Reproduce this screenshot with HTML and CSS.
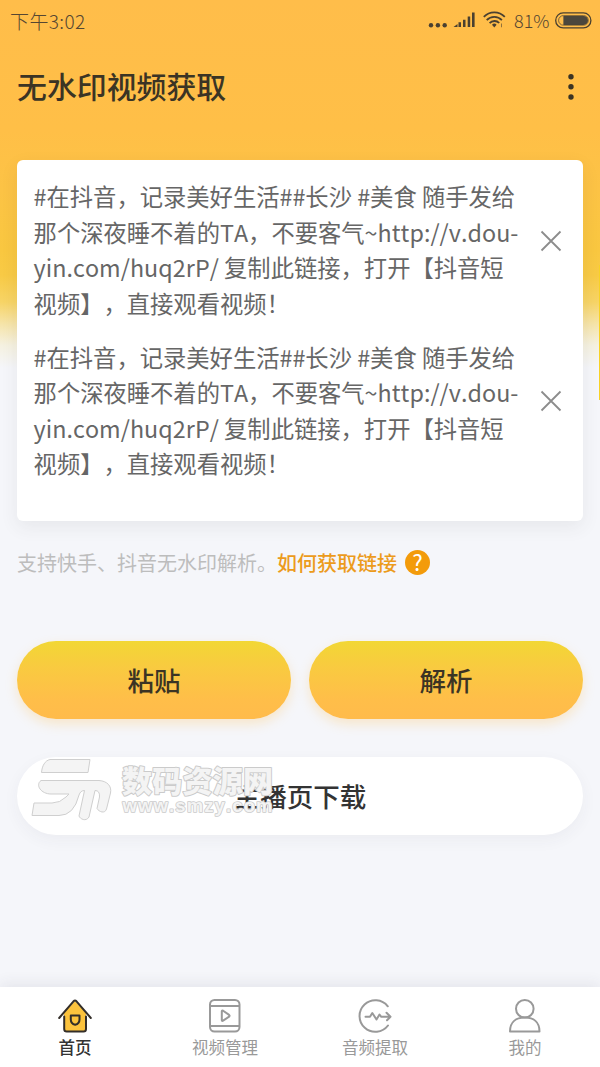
FILE: index.html
```html
<!DOCTYPE html>
<html lang="zh-CN">
<head>
<meta charset="utf-8">
<title>无水印视频获取</title>
<link rel="stylesheet" href="styles.css">
</head>
<body>
<div class="app">
  <div class="status">
    <span class="time">下午3:02</span>
    <svg class="signals" width="78" height="20" viewBox="0 0 78 20">
      <g fill="#4a4030">
        <circle cx="3" cy="15.3" r="2.2"/><circle cx="9.900" cy="15.3" r="2.2"/><circle cx="16.700" cy="15.3" r="2.2"/>
        <path d="M25.500 17l4-3V17zM30.500 12.200h2.500V17h-2.500zM35 9.700h2.500V17H35zM39.700 6.500h2.500V17h-2.500zM44 2.500h2.600V17H44z"/>
        <path d="M64 14.800a3.200 3.200 0 0 1 4.600 0L66.300 17.400z"/>
        <path d="M73 13.500v3.700h1v-3.700z" opacity=".6"/>
      </g>
      <g fill="none" stroke="#4a4030" stroke-width="1.800">
        <path d="M55.800 6.900a14.500 14.500 0 0 1 21 0M58.700 10.200a10.500 10.500 0 0 1 15.200 0M61.600 13.200a6.500 6.500 0 0 1 9.600-.200"/>
      </g>
    </svg>
    <span class="percent">81%</span>
    <svg class="battery" width="37" height="17" viewBox="0 0 37 17">
      <rect x=".7" y=".9" width="35.200" height="15" rx="7.500" fill="none" stroke="#4a4030" stroke-width="1.300"/>
      <path d="M8.400 3.900H28.500a4.500 4.500 0 0 1 0 9H8.400z" fill="#4b473d"/>
      <path d="M8.400 3.600H28.500a4.800 4.800 0 0 1 0 9.600H8.400a4.800 4.800 0 0 1 0-9.600z" fill="none" stroke="#4a4030" stroke-width=".700"/>
    </svg>
  </div>

  <div class="titlebar">
    <h1 class="title">无水印视频获取</h1>
    <svg class="more" width="8" height="28" viewBox="0 0 8 28" fill="#3b3424"><circle cx="4" cy="3.700" r="2.700"/><circle cx="4" cy="13.800" r="2.700"/><circle cx="4" cy="24" r="2.700"/></svg>
  </div>

  <div class="card">
    <div class="item">
      <p class="copy">#在抖音，记录美好生活##长沙 #美食 随手发给<br>那个深夜睡不着的TA，不要客气<span class="url">~http://v.dou-</span><br><span class="url">yin.com/huq2rP/</span> 复制此链接，打开【抖音短<br>视频】，直接观看视频！</p>
      <svg class="close" width="22" height="22" viewBox="0 0 22 22"><path d="M1.500 1.500l19 19M20.500 1.500l-19 19"/></svg>
    </div>
    <div class="item">
      <p class="copy">#在抖音，记录美好生活##长沙 #美食 随手发给<br>那个深夜睡不着的TA，不要客气<span class="url">~http://v.dou-</span><br><span class="url">yin.com/huq2rP/</span> 复制此链接，打开【抖音短<br>视频】，直接观看视频！</p>
      <svg class="close" width="22" height="22" viewBox="0 0 22 22"><path d="M1.500 1.500l19 19M20.500 1.500l-19 19"/></svg>
    </div>
  </div>

  <div class="hint">
    <span>支持快手、抖音无水印解析。</span><span class="hint-link">如何获取链接</span><span class="help">?</span>
  </div>

  <div class="actions">
    <div class="btn btn-gold">粘贴</div>
    <div class="btn btn-gold">解析</div>
  </div>

  <div class="btn btn-white">主播页下载
    <svg class="watermark" width="270" height="66" viewBox="0 0 270 66">
      <g fill="#f4f4f4" stroke="#cfcfcf" stroke-width="1" stroke-linejoin="round">
        <path d="M22 2.500H62L60 15.500H13.500C14 9 17 3.500 22 2.500z"/>
        <path d="M13 23.500H71C79 24 84 29 82.500 36L78.500 52C77 57 71 55 69 51.500L71.500 40Q72 33.500 67 33.500L61 60C58 65 52 62 51 59L56.500 33.500Q52.500 33.500 51 38Q46 58.500 31 58.500H4L6 46H24Q32 46 38 40L41 37H23C13 37 7 28 13 23.500z"/>
      </g>
      <text class="mark-name" x="94" y="35" textLength="151" lengthAdjust="spacing">数码资源网</text>
      <text class="mark-url" x="94.500" y="54.500" textLength="150" lengthAdjust="spacing">www.smzy.com</text>
    </svg>
  </div>

  <nav class="tabs">
    <div class="tab active">
      <svg width="36" height="36" viewBox="0 0 36 36" fill="none" stroke="#332e29" stroke-width="2" stroke-linecap="round" stroke-linejoin="round">
        <path d="M18 3L7 15V31q0 2.500 2.500 2.500h17q2.500 0 2.500-2.500V15z" fill="#fcc33d" stroke="none"/>
        <path d="M2.200 20L16.500 3.300q1.500-1.500 3 0L33.800 20M7.200 18.500V31q0 2.500 2.500 2.500h16.800q2.500 0 2.500-2.500V18.500"/>
        <path d="M13.800 17.500h8.700v4q0 4.200-4.300 5.300-4.400-1.100-4.400-5.300z"/>
      </svg>
      <span>首页</span>
    </div>
    <div class="tab">
      <svg width="36" height="36" viewBox="0 0 36 36" fill="none" stroke="#999" stroke-width="2" stroke-linejoin="round">
        <rect x="3" y="2" width="29.500" height="31.500" rx="4.500"/><path d="M3 8h29.500M3 28h29.500M14.800 13.500q0-1.500 1.300-.800l6 4.200q1 .900 0 1.800l-6 4q-1.300.700-1.300-.700z"/>
      </svg>
      <span>视频管理</span>
    </div>
    <div class="tab">
      <svg width="36" height="36" viewBox="0 0 36 36" fill="none" stroke="#999" stroke-width="2" stroke-linecap="round" stroke-linejoin="round">
        <path d="M30.800 8.300A15.800 15.800 0 1 0 31 27.500M8.500 18.800H13l2.300-3.800 4.200 6.500 3-5 1.800 2.300H33M29.500 14.800l4 4-3.500 3.500"/>
      </svg>
      <span>音频提取</span>
    </div>
    <div class="tab">
      <svg width="36" height="36" viewBox="0 0 36 36" fill="none" stroke="#999" stroke-width="2" stroke-linejoin="round">
        <circle cx="17.800" cy="10.800" r="8.800"/><path d="M3 33.500H32.500C32.500 24 26.500 19.600 17.800 19.600S3 24 3 33.500z"/>
      </svg>
      <span>我的</span>
    </div>
  </nav>
</div>
</body>
</html>
```
FILE: styles.css
```css
* { box-sizing: border-box; }
body {
  margin: 0;
  font-family: "Noto Sans CJK SC", sans-serif;
  font-kerning: none;
  text-spacing-trim: space-all;
  color: #333;
}
.app {
  position: relative;
  display: flex;
  flex-direction: column;
  width: 600px;
  height: 1067px;
  overflow: hidden;
  background: linear-gradient(#ffbd4a 0, #ffbf47 130px, #fcc345 190px, #f9c740 250px, #f8ca45 275px, #f7d466 302px, #f6e5ac 325px, #f5f1e0 345px, #f5f6fa 368px);
}
.app::after {
  content: "";
  position: absolute;
  right: 0;
  top: 265px;
  width: 1px;
  height: 135px;
  background: #f8d225;
}
.status {
  display: flex;
  align-items: center;
  height: 40px;
  padding: 0 8px 0 10px;
  color: #554632;
  font-size: 19px;
  font-weight: 300;
}
.time { margin-right: auto; letter-spacing: 0.400px; }
.signals { margin-right: 8px; }
.percent { width: 41px; font-size: 18px; }
.titlebar {
  display: flex;
  align-items: center;
  justify-content: space-between;
  height: 94px;
  padding: 0 25px 0 17px;
}
.title {
  margin: -4px 0 0;
  font-size: 29.900px;
  line-height: 44px;
  font-weight: 500;
  color: #3b3424;
}
.card {
  display: flex;
  flex-direction: column;
  gap: 18px;
  height: 361px;
  margin: 26px 17px 0;
  padding: 19px 21px 0 16.600px;
  border-radius: 6px;
  background: #fff;
  box-shadow: 0 6px 18px rgba(60, 60, 70, 0.08);
}
.item {
  display: flex;
  align-items: center;
  justify-content: space-between;
  height: 142.500px;
}
.copy {
  margin: 0;
  white-space: nowrap;
  font-size: 23.300px;
  line-height: 35.600px;
  color: #666;
}
.url { letter-spacing: 0.050px; }
.close {
  margin-top: -19px;
  fill: none;
  stroke: #8c8c8c;
  stroke-width: 1.800;
}
.hint {
  display: flex;
  align-items: center;
  height: 40px;
  margin: 21px 17px 0;
  font-size: 20px;
  color: #bdbdbd;
}
.hint-link { font-weight: 500; color: #ec9b1c; }
.help {
  width: 25px;
  height: 25px;
  margin-left: 8px;
  border-radius: 50%;
  background: #f39b0b;
  color: #fff;
  font-size: 22px;
  line-height: 23px;
  text-align: center;
}
.actions {
  display: flex;
  gap: 18px;
  margin: 59px 17px 0;
}
.btn {
  position: relative;
  display: flex;
  align-items: center;
  justify-content: center;
  height: 78px;
  padding-bottom: 2px;
  border-radius: 39px;
  font-size: 26.500px;
  font-weight: 500;
}
.btn-gold {
  flex: 1;
  color: #3b3424;
  background: linear-gradient(#f2d735, #f9ca40 35%, #ffbe49 75%, #ffbb4b);
  box-shadow: 0 5px 12px rgba(255, 190, 80, 0.28);
}
.btn-white {
  margin: 38px 17px 0;
  background: #fff;
  box-shadow: 0 5px 16px rgba(60, 60, 80, 0.05);
}
.watermark {
  position: absolute;
  left: 11px;
  top: 0;
}
.mark-name, .mark-url {
  fill: #f4f4f4;
  stroke: #cbcbcb;
  stroke-linejoin: round;
  paint-order: stroke;
  font-weight: 900;
}
.mark-name { font-size: 30px; stroke-width: 2px; }
.mark-url {
  font-family: "Liberation Sans", sans-serif;
  font-size: 18.500px;
  stroke-width: 1.600px;
}
.tabs {
  display: flex;
  height: 80px;
  margin-top: auto;
  background: #fff;
  box-shadow: 0 -3px 14px rgba(60, 60, 80, 0.09);
}
.tab {
  display: flex;
  flex: 1;
  flex-direction: column;
  align-items: center;
  padding-top: 11px;
  font-size: 16.500px;
  line-height: 24px;
  color: #999;
}
.tab span { margin-top: 1px; }
.active { color: #333; font-weight: 500; }
```
